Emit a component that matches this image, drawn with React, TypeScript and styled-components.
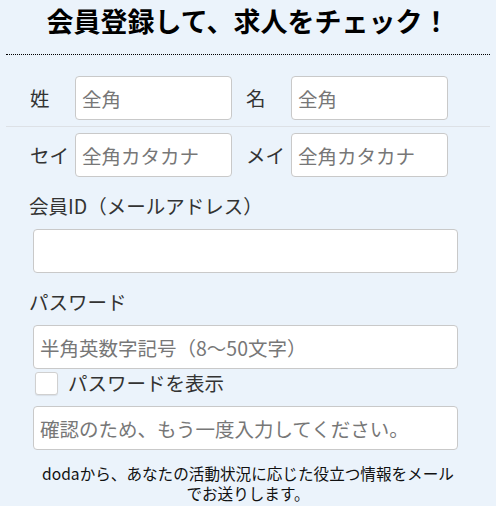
import React from "react";
import styled, { createGlobalStyle } from "styled-components";

const GlobalStyle = createGlobalStyle`
  html, body {
    margin: 0;
    padding: 0;
    background: #ebf3fb;
  }
  body {
    font-family: "Noto Sans CJK JP", "Noto Sans", sans-serif;
    color: #333;
  }
  * { box-sizing: border-box; }
`;

const Page = styled.div`
  width: 496px;
  min-height: 506px;
  padding: 0 6px;
  background: #ebf3fb;
`;

const Header = styled.h1`
  margin: 0;
  padding-bottom: 12px;
  border-bottom: 1px dotted #000;
  font-size: 27px;
  line-height: 42px;
  font-weight: 700;
  color: #000;
  text-align: center;
  white-space: nowrap;
`;

const NameRow = styled.div<{ $divided?: boolean; $top: number; $bottom: number }>`
  display: flex;
  align-items: center;
  gap: 14px;
  padding: ${(p) => p.$top}px 0 ${(p) => p.$bottom}px 24px;
  border-bottom: ${(p) => (p.$divided ? "1px solid #dde1e6" : "none")};
`;

const NameGroup = styled.div`
  display: flex;
  align-items: center;
`;

const NameLabel = styled.span`
  width: 45px;
  font-size: 19.5px;
  line-height: 26px;
  color: #333;
`;

const TextInput = styled.input<{ $width?: string }>`
  display: block;
  width: ${(p) => p.$width ?? "157px"};
  height: 44px;
  margin: 0;
  padding: 0 6px;
  border: 1px solid #c9c9c9;
  border-radius: 4px;
  background: #fff;
  font-family: "Noto Sans CJK JP", sans-serif;
  font-size: 19.5px;
  color: #333;
  outline: none;
  &::placeholder {
    color: #777;
  }
`;

const Section = styled.div`
  padding: 0 32px 0 23px;
`;

const FieldLabel = styled.div`
  margin: 16px 0 10px;
  font-size: 19.5px;
  line-height: 26px;
  color: #333;
`;

const FieldInput = styled(TextInput)`
  margin-left: 4px;
`;

const CheckRow = styled.label`
  display: flex;
  align-items: center;
  gap: 10px;
  height: 24px;
  margin: 2px 0 11px 6px;
  font-size: 19.5px;
  line-height: 24px;
  color: #333;
`;

const CheckBox = styled.span`
  display: block;
  width: 23px;
  height: 23px;
  border: 1px solid #d0d0d0;
  border-radius: 3px;
  background: #fff;
  box-shadow: 0 1px 1px rgba(0, 0, 0, 0.08);
`;

const Notice = styled.p`
  margin: 13px 0 0;
  font-size: 15.6px;
  line-height: 20px;
  color: #111;
  text-align: center;
`;

export default function App() {
  return (
    <>
      <GlobalStyle />
      <Page>
        <Header>会員登録して、求人をチェック！</Header>
        <NameRow $divided $top={21} $bottom={6}>
          <NameGroup>
            <NameLabel>姓</NameLabel>
            <TextInput placeholder="全角" />
          </NameGroup>
          <NameGroup>
            <NameLabel>名</NameLabel>
            <TextInput placeholder="全角" />
          </NameGroup>
        </NameRow>
        <NameRow $top={6} $bottom={0}>
          <NameGroup>
            <NameLabel>セイ</NameLabel>
            <TextInput placeholder="全角カタカナ" />
          </NameGroup>
          <NameGroup>
            <NameLabel>メイ</NameLabel>
            <TextInput placeholder="全角カタカナ" />
          </NameGroup>
        </NameRow>
        <Section>
          <FieldLabel>会員ID（メールアドレス）</FieldLabel>
          <FieldInput $width="425px" />
          <FieldLabel>パスワード</FieldLabel>
          <FieldInput $width="425px" placeholder="半角英数字記号（8～50文字）" />
          <CheckRow>
            <CheckBox />
            パスワードを表示
          </CheckRow>
          <FieldInput $width="425px" placeholder="確認のため、もう一度入力してください。" />
        </Section>
        <Notice>
          dodaから、あなたの活動状況に応じた役立つ情報をメール
          <br />
          でお送りします。
        </Notice>
      </Page>
    </>
  );
}
